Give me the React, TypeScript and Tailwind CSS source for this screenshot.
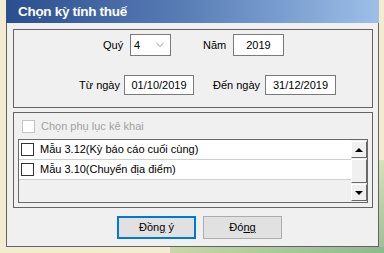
import { ChevronDown } from 'lucide-react';

const FONT = "font-['Liberation_Sans','DejaVu_Sans',sans-serif]";

function Checkbox({ disabled }: { disabled?: boolean }) {
  return (
    <span
      className={`inline-block w-[13px] h-[13px] border bg-white shrink-0 ${
        disabled ? 'border-[#c4c4c4]' : 'border-[#333333]'
      }`}
    />
  );
}

function ScrollButton({ up }: { up?: boolean }) {
  return (
    <div className="h-[17px] bg-[#f0f0f0] border-t border-l border-t-white border-l-white border-b border-r border-b-[#696969] border-r-[#696969] flex items-center justify-center">
      <span
        className={`w-0 h-0 border-l-[4px] border-r-[4px] border-l-transparent border-r-transparent ${
          up ? 'border-b-[4px] border-b-black' : 'border-t-[4px] border-t-black'
        }`}
      />
    </div>
  );
}

const ROWS = ['Mẫu 3.12(Kỳ báo cáo cuối cùng)', 'Mẫu 3.10(Chuyển địa điểm)'];

export default function App() {
  return (
    <div className={`w-[384px] h-[253px] overflow-hidden bg-[#f3ecd0] ${FONT} text-[11px] text-black whitespace-nowrap`}>
      <div className="flex">
        <div className="ml-[6px] w-[373px] h-[247px] bg-[#f0f0f0] border-x border-b border-[#646464] flex flex-col">
          {/* title bar */}
          <div className="h-[23px] -mx-px bg-gradient-to-r from-[#2a4e8e] via-[#5b80b8] to-[#9dbfe8] flex items-center pl-[12px]">
            <span className="text-white font-bold text-[13.5px] tracking-[-0.3px] leading-none">Chọn kỳ tính thuế</span>
          </div>

          {/* period group */}
          <div className="mt-[6px] ml-[6px] w-[360px] h-[79px] border border-[#646464]">
            <div className="flex items-center mt-[4px] h-[22px]">
              <span className="ml-[89px] w-[19px] text-right">Quý</span>
              <div className="ml-[8px] w-[41px] h-[22px] bg-white border border-[#7a7a7a] flex items-center pl-[3px] pr-[4px] justify-between">
                <span>4</span>
                <ChevronDown size={12} strokeWidth={1.3} className="text-[#555555]" />
              </div>
              <span className="ml-[32px] w-[24px]">Năm</span>
              <div className="ml-[6px] w-[51px] h-[22px] bg-white border border-[#7a7a7a] flex items-center justify-center">
                2019
              </div>
            </div>
            <div className="flex items-center mt-[19px] h-[20px]">
              <span className="ml-[65px] w-[40px] shrink-0">Từ ngày</span>
              <div className="ml-[5px] w-[70px] h-[20px] bg-white border border-[#7a7a7a] flex items-center justify-center shrink-0">
                01/10/2019
              </div>
              <span className="ml-[19px] w-[47px] shrink-0">Đến ngày</span>
              <div className="ml-[5px] w-[71px] h-[20px] bg-white border border-[#7a7a7a] flex items-center justify-center shrink-0">
                31/12/2019
              </div>
            </div>
          </div>

          {/* appendix group */}
          <div className="mt-[4px] ml-[6px] w-[360px] h-[96px] border border-[#646464] flex flex-col">
            <div className="flex items-center h-[13px] mt-[7px] ml-[8px] gap-[6px] text-[#a0a0a0]">
              <Checkbox disabled />
              <span>Chọn phụ lục kê khai</span>
            </div>
            <div className="mt-[6px] ml-[4px] w-[350px] h-[64px] border border-[#696969] bg-[#f0f0f0] flex">
              <div className="flex-1 flex flex-col">
                {ROWS.map((r) => (
                  <div key={r} className="h-[20px] bg-white border-b border-[#d0d0d0] flex items-center pl-[2px] gap-[6px]">
                    <Checkbox />
                    <span>{r}</span>
                  </div>
                ))}
              </div>
              <div className="w-[16px] flex flex-col pt-[1px] pb-[1px]">
                <ScrollButton up />
                <div className="flex-1 mt-[1px] mb-[1px] bg-[#f0f0f0] border-t border-l border-t-white border-l-white border-b border-r border-b-[#696969] border-r-[#696969]" />
                <ScrollButton />
              </div>
            </div>
          </div>

          {/* buttons */}
          <div className="mt-[8px] ml-[110px] flex gap-[7px]">
            <button className="w-[79px] h-[23px] bg-[#e1e1e1] border-2 border-[#0078d7] flex items-center justify-center">
              <span>
                Đồn<span className="underline underline-offset-1">g</span> ý
              </span>
            </button>
            <button className="w-[79px] h-[23px] bg-[#e1e1e1] border border-[#adadad] flex items-center justify-center">
              <span>
                Đó<span className="underline underline-offset-1">ng</span>
              </span>
            </button>
          </div>
        </div>
        <div className="flex-1 mt-[160px] bg-gradient-to-b from-[#d8e0b8] to-[#9fc09a]" />
      </div>
      <div className="ml-[170px] h-[6px] bg-gradient-to-r from-[#c8d8a8] to-[#8fb890]" />
    </div>
  );
}
